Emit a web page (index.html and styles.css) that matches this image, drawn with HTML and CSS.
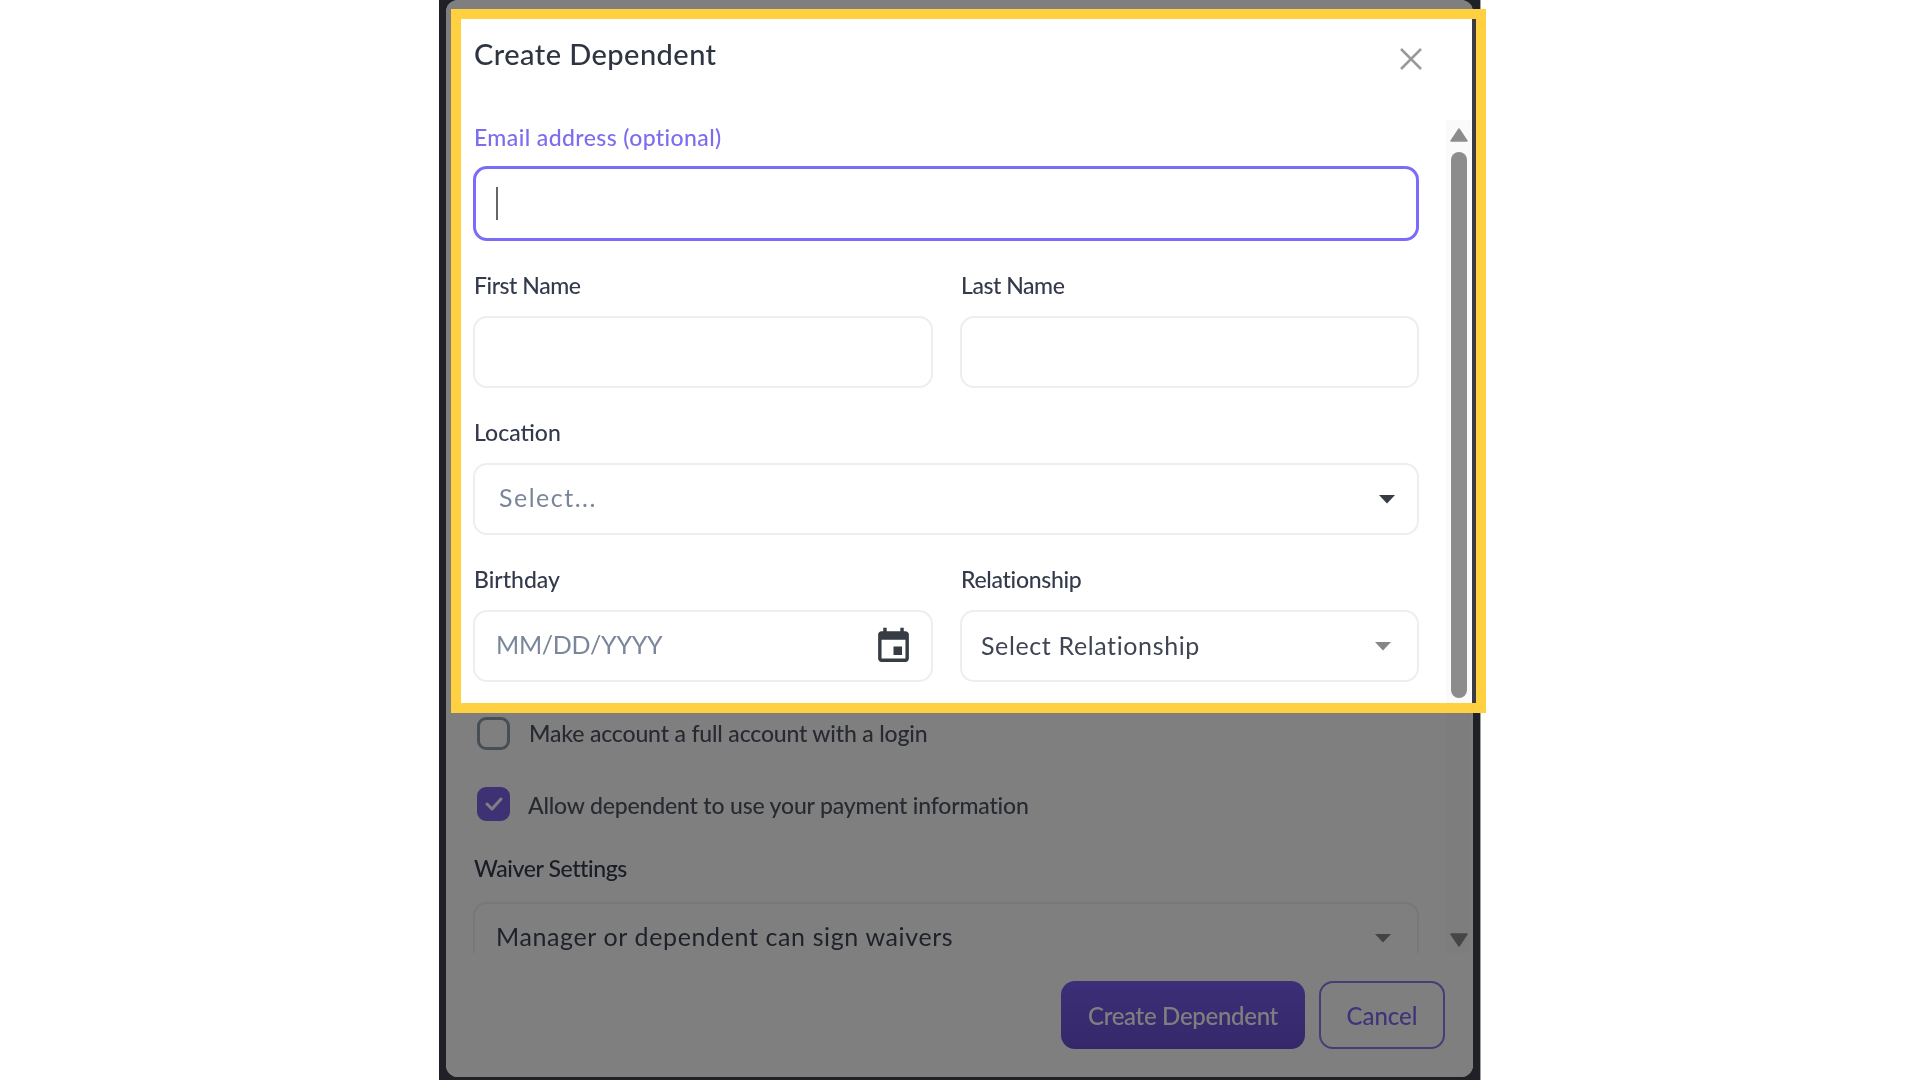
FILE: index.html
```html
<!DOCTYPE html>
<html>
<head>
    <title>Create Dependent</title>
    <meta charset="UTF-8">
    <link rel="stylesheet" href="styles.css">
</head>
<body>
<div class="frame">
    <div class="modal">
        <div class="spotlight">
            <div class="spotlight-inner">
                <div class="modal-header">
                    <h2 class="modal-title">Create Dependent</h2>
                    <svg class="close-icon" viewBox="0 0 22 22"><path d="M1 1l20 20M21 1L1 21"/></svg>
                </div>
                <div class="scroll-row">
                    <div class="form">
                        <div class="field">
                            <label class="label label-active">Email address (optional)</label>
                            <div class="control control-focused"><span class="caret"></span></div>
                        </div>
                        <div class="field-row">
                            <div class="field">
                                <label class="label label-name">First Name</label>
                                <div class="control"></div>
                            </div>
                            <div class="field">
                                <label class="label label-name">Last Name</label>
                                <div class="control"></div>
                            </div>
                        </div>
                        <div class="field">
                            <label class="label">Location</label>
                            <div class="control control-select">
                                <span class="placeholder select-placeholder">Select...</span>
                                <svg class="arrow arrow-dark" viewBox="0 0 18 10"><path d="M1 1h16L9 9.5z"/></svg>
                            </div>
                        </div>
                        <div class="field-row">
                            <div class="field">
                                <label class="label">Birthday</label>
                                <div class="control control-date">
                                    <span class="placeholder date-placeholder">MM/DD/YYYY</span>
                                    <svg class="calendar-icon" viewBox="0 0 24 24"><path d="M17 12h-5v5h5v-5zM16 1v2H8V1H6v2H5c-1.11 0-1.99.9-1.99 2L3 19c0 1.1.89 2 2 2h14c1.1 0 2-.9 2-2V5c0-1.1-.9-2-2-2h-1V1h-2zm3 18H5V8h14v11z"/></svg>
                                </div>
                            </div>
                            <div class="field">
                                <label class="label label-relationship">Relationship</label>
                                <div class="control control-native">
                                    <span class="value">Select Relationship</span>
                                    <svg class="arrow arrow-gray" viewBox="0 0 18 10"><path d="M1 1h16L9 9.5z"/></svg>
                                </div>
                            </div>
                        </div>
                    </div>
                    <div class="scrollbar">
                        <svg class="scroll-arrow" viewBox="0 0 18 14"><path d="M9 1l8 12H1z"/></svg>
                        <div class="scroll-thumb"></div>
                    </div>
                </div>
            </div>
        </div>

        <div class="scroll-row lower">
            <div class="form">
                <div class="check-row">
                    <span class="checkbox"></span>
                    <span class="check-label">Make account a full account with a login</span>
                </div>
                <div class="check-row">
                    <span class="checkbox checkbox-on">
                        <svg class="check-icon" viewBox="0 0 20 20"><path d="M3 10l5 5 9-10"/></svg>
                    </span>
                    <span class="check-label check-label-low">Allow dependent to use your payment information</span>
                </div>
                <div class="field">
                    <label class="label label-waiver">Waiver Settings</label>
                    <div class="control control-native control-waiver">
                        <span class="value">Manager or dependent can sign waivers</span>
                        <svg class="arrow arrow-gray" viewBox="0 0 18 10"><path d="M1 1h16L9 9.5z"/></svg>
                    </div>
                </div>
            </div>
            <div class="scrollbar scrollbar-lower">
                <svg class="scroll-arrow" viewBox="0 0 18 14"><path d="M9 13L1 1h16z"/></svg>
            </div>
        </div>

        <div class="modal-footer">
            <button class="btn btn-primary">Create Dependent</button>
            <button class="btn btn-outline">Cancel</button>
        </div>

        <div class="backdrop"></div>
    </div>
</div>
</body>
</html>
```

FILE: styles.css
```css
* {
    box-sizing: border-box;
}

body {
    margin: 0;
    background-color: #fff;
    font-family: "Lato", "Liberation Sans", sans-serif;
    overflow: hidden;
}

.frame {
    width: 1042px;
    height: 1080px;
    margin-left: 439px;
    padding: 0 7px 3px 7px;
    background-color: #202126;
    border-right: 1px solid #a0a0a0;
}

.modal {
    position: relative;
    height: 1077px;
    padding-top: 9px;
    background-color: #fff;
    border-radius: 12px;
}

.backdrop {
    position: absolute;
    top: 0;
    right: 0;
    bottom: 0;
    left: 0;
    z-index: 1;
    border-radius: 12px;
    background-color: rgba(0, 0, 0, 0.5);
}

/* yellow box sticks out past the modal on the right */
.spotlight {
    position: relative;
    z-index: 2;
    width: 1035px;
    margin-left: 5px;
    border: 10px solid #ffd040;
}

.spotlight-inner {
    height: 684px;
    overflow: hidden;
    background-color: #fff;
    border-right: 4px solid #3a3b45;
}

/* the source is a soft upscaled picture */
.modal-title,
.label,
.placeholder,
.value,
.check-label,
.btn,
.close-icon,
.arrow,
.calendar-icon,
.checkbox {
    filter: blur(0.5px);
}

.modal-header {
    display: flex;
    justify-content: space-between;
    height: 101px;
    padding: 17px 50px 0 13px;
}

.modal-title {
    margin: 0;
    font-size: 29px;
    line-height: 36px;
    font-weight: 500;
    letter-spacing: 0.45px;
    color: #2f3441;
}

.close-icon {
    width: 22px;
    height: 22px;
    margin-top: 12px;
    fill: none;
    stroke: #999;
    stroke-width: 2.5;
}

.scroll-row {
    display: flex;
    justify-content: space-between;
    padding-left: 12px;
}

.form {
    width: 946px;
    padding-top: 7px;
}

.field {
    margin-bottom: 36px;
}

.field-row {
    display: grid;
    grid-template-columns: 460px 459px;
    column-gap: 27px;
}

.label {
    display: block;
    height: 24px;
    margin: 0 0 15px 1px;
    font-size: 23px;
    font-weight: 500;
    line-height: 16px;
    color: #343a4c;
}

.label-active {
    line-height: 20px;
    letter-spacing: 0.4px;
    color: #7b6cf0;
}

.label-name {
    letter-spacing: -0.45px;
}

.label-relationship {
    letter-spacing: -0.3px;
}

.label-waiver {
    margin-bottom: 18px;
    letter-spacing: -0.4px;
}

.control {
    display: flex;
    align-items: center;
    justify-content: space-between;
    height: 72px;
    background-color: #fff;
    border: 2px solid #eceef0;
    border-radius: 14px;
}

.control-focused {
    height: 75px;
    padding-left: 20px;
    border: 3px solid #7a6cf8;
}

.control-select {
    padding: 0 21px 0 24px;
}

.control-date {
    padding: 0 17px 0 21px;
}

.control-native {
    padding: 0 25px 0 19px;
}

.control-waiver {
    padding-left: 21px;
}

.control-waiver .value {
    padding-bottom: 5px;
}

.caret {
    width: 2px;
    height: 33px;
    background-color: #666;
}

.placeholder {
    padding-bottom: 4px;
    font-size: 25px;
    color: #7a8699;
}

.select-placeholder {
    letter-spacing: 1.5px;
}

.date-placeholder {
    letter-spacing: -0.3px;
}

.value {
    padding-bottom: 3px;
    font-size: 25px;
    letter-spacing: 0.62px;
    color: #3f4554;
}

.arrow {
    width: 18px;
    height: 10px;
}

.arrow-dark {
    fill: #363b44;
}

.arrow-gray {
    fill: #868686;
}

.calendar-icon {
    width: 41px;
    height: 41px;
    fill: #363b44;
}

.scrollbar {
    display: flex;
    flex-direction: column;
    align-items: center;
    flex-shrink: 0;
    width: 25px;
    margin-right: 1px;
    padding-top: 8px;
    background-color: #fafafa;
}

.scroll-arrow {
    width: 18px;
    height: 14px;
    fill: #8c8c8c;
    stroke: #8c8c8c;
    stroke-width: 1.5;
    stroke-linejoin: round;
}

.scroll-thumb {
    width: 16px;
    height: 546px;
    margin-top: 10px;
    border-radius: 8px;
    background-color: #8c8c8c;
}

.lower {
    height: 240px;
    overflow: hidden;
    padding-left: 27px;
}

.lower .form {
    padding-top: 3px;
}

.scrollbar-lower {
    justify-content: flex-end;
    padding: 0 0 6px;
    margin-right: 2px;
}

.check-row {
    display: flex;
    align-items: center;
    height: 34px;
    margin-bottom: 37px;
    padding-left: 4px;
}

.check-row + .field {
    margin-top: 39px;
}

.checkbox {
    display: flex;
    align-items: center;
    justify-content: center;
    width: 33px;
    height: 33px;
    margin-right: 19px;
    border: 3px solid #909caa;
    border-radius: 9px;
}

.checkbox-on {
    height: 34px;
    background-color: #7c62e8;
    border-color: #7c62e8;
}

.check-icon {
    width: 20px;
    height: 20px;
    fill: none;
    stroke: #fff;
    stroke-width: 3;
    stroke-linecap: round;
    stroke-linejoin: round;
}

.check-label {
    font-size: 23px;
    font-weight: 500;
    letter-spacing: -0.17px;
    color: #4f5562;
}

.check-label-low {
    padding-top: 2px;
    margin-left: -1px;
}

.modal-footer {
    display: flex;
    justify-content: flex-end;
    column-gap: 14px;
    padding: 28px 28px 0 0;
}

.btn {
    height: 68px;
    border-radius: 14px;
    font-family: "Lato", "Liberation Sans", sans-serif;
    font-size: 24px;
    font-weight: 500;
}

.btn-primary {
    width: 244px;
    letter-spacing: -0.3px;
    color: #fff;
    background-image: linear-gradient(#7a5ef0, #6a50d4);
    border: none;
}

.btn-outline {
    width: 126px;
    color: #8068f0;
    background-color: transparent;
    border: 2px solid #8c78f0;
}
```
